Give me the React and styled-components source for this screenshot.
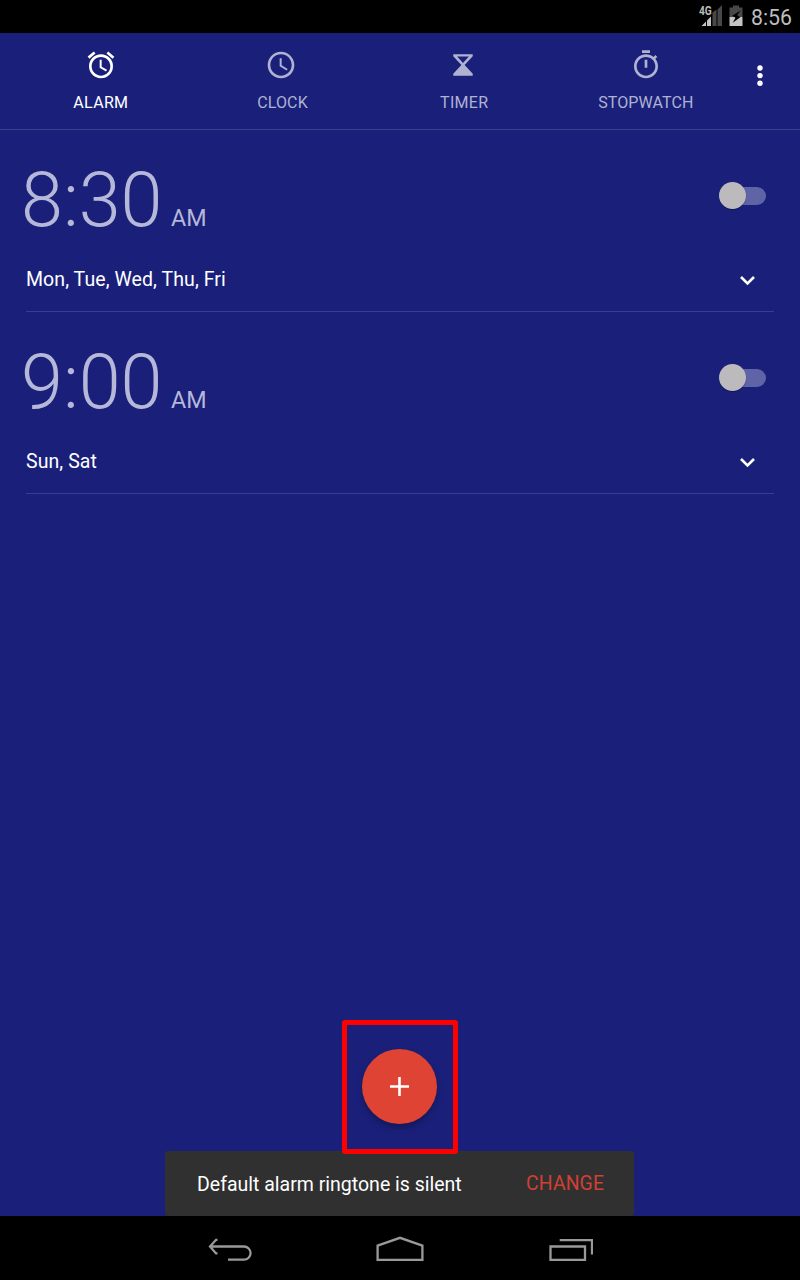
import React from "react";
import styled, { createGlobalStyle } from "styled-components";

const GlobalStyle = createGlobalStyle`
  * { box-sizing: border-box; }
  body { margin: 0; background: #000; }
  button { border: 0; padding: 0; background: none; font: inherit; color: inherit; display: block; }
  svg { display: block; }
`;

const Screen = styled.div`
  width: 800px;
  height: 1280px;
  display: flex;
  flex-direction: column;
  font-family: Roboto, "Liberation Sans", sans-serif;
  color: #fff;
  background: #1a207a;
  overflow: hidden;
`;

const StatusBar = styled.header`
  height: 33px;
  flex: none;
  display: flex;
  justify-content: flex-end;
  background: #000;
  padding-right: 8px;
`;

const StatusTime = styled.span`
  font-size: 21.3px;
  line-height: 36px;
  color: #bebebe;
  margin-left: 7px;
`;

const TabBar = styled.nav`
  height: 97px;
  flex: none;
  display: flex;
  padding-left: 10px;
  border-bottom: 1px solid #393f8e;
`;

const Tab = styled.button`
  width: 181.7px;
  display: flex;
  flex-direction: column;
  align-items: center;
  padding-top: 15.5px;
  color: ${(p) => (p.$active ? "#fff" : "#b0b2d2")};
`;

const IconSlot = styled.span`
  margin-left: ${(p) => p.$nudge}px;
`;

const TabLabel = styled.span`
  font-size: 16px;
  line-height: 20px;
  margin-top: 12px;
  letter-spacing: ${(p) => p.$tracking}px;
`;

const MoreButton = styled.button`
  margin: 30px 0 0 17.600px;
  height: 24px;
`;

const AlarmList = styled.main`
  flex: 1;
  padding: 0 26px;
`;

const AlarmCard = styled.section`
  height: 182px;
  display: flex;
  flex-direction: column;
  border-bottom: 1px solid #393f8e;
`;

const TimeRow = styled.div`
  height: 118px;
  display: flex;
  justify-content: space-between;
  padding: 26px 8px 0 0;
`;

const Time = styled.div`
  display: flex;
  align-items: baseline;
  color: #b5b8d8;
  height: 88px;
  margin-left: -5px;
`;

const Digits = styled.span`
  font-size: 75.5px;
  font-weight: 300;
  line-height: 88px;
`;

const Meridiem = styled.span`
  font-size: 23.3px;
  margin-left: 8.5px;
`;

const SwitchTrack = styled.button`
  width: 44px;
  height: 18px;
  margin-top: 31px;
  border-radius: 9px;
  background: #5e64a6;
  display: flex;
  align-items: center;
`;

const SwitchThumb = styled.span`
  flex: none;
  width: 27px;
  height: 27px;
  margin: -1px 0 0 -2.6px;
  border-radius: 50%;
  background: #bdbabe;
  box-shadow: 0 1px 1px rgba(0, 0, 0, 0.3);
`;

const DaysRow = styled.div`
  display: flex;
  justify-content: space-between;
  align-items: center;
  height: 63px;
  padding: 0 17px 0 0;
`;

const Days = styled.span`
  font-size: 19.5px;
  line-height: 24px;
  letter-spacing: 0.08px;
`;

const Footer = styled.footer`
  flex: none;
  display: flex;
  flex-direction: column;
  align-items: center;
`;

const Highlight = styled.div`
  position: relative;
  z-index: 1;
  width: 116px;
  height: 134px;
  margin-bottom: -3px;
  border: 5px solid #f00;
  border-radius: 3px;
  display: flex;
  justify-content: center;
  align-items: center;
`;

const AddButton = styled.button`
  width: 75px;
  height: 75px;
  margin: 0 1px 2px 0;
  border-radius: 50%;
  background: #df4334;
  display: flex;
  align-items: center;
  justify-content: center;
  box-shadow: 0 4px 6px rgba(0, 0, 0, 0.28);
`;

const Snackbar = styled.div`
  width: 469px;
  height: 65px;
  margin-right: 1px;
  padding: 0 30px 0 32px;
  border-radius: 3px;
  background: #303030;
  display: flex;
  align-items: center;
  justify-content: space-between;
`;

const Message = styled.span`
  font-size: 19.5px;
  line-height: 24px;
  padding-top: 2px;
`;

const Action = styled.button`
  font-size: 19.4px;
  line-height: 24px;
  letter-spacing: 0.1px;
  color: #d04033;
`;

const NavBar = styled.div`
  height: 64px;
  flex: none;
  background: #000;
  display: flex;
  align-items: flex-start;
  padding: 20px 0 0 207px;
  gap: 123px;
`;

const TabIcon = ({ d }) => (
  <svg width="32" height="32" viewBox="0 0 24 24" fill="currentColor">
    <path d={d} />
  </svg>
);

const tabs = [
  { label: "ALARM", nudge: 1, tracking: 0.3, d: "M22 5.72l-4.6-3.86-1.29 1.53 4.6 3.86L22 5.72zM7.88 3.39L6.6 1.86 2 5.71l1.29 1.53 4.59-3.85zM12.5 8H11v6l4.75 2.85.75-1.23-4-2.37V8zM12 4c-4.97 0-9 4.03-9 9s4.02 9 9 9a9 9 0 1 0 0-18zm0 16c-3.87 0-7-3.13-7-7s3.13-7 7-7 7 3.13 7 7-3.13 7-7 7z" },
  { label: "CLOCK", nudge: -2.5, tracking: 0.1, d: "M11.99 2C6.47 2 2 6.48 2 12s4.47 10 9.99 10C17.52 22 22 17.52 22 12S17.52 2 11.99 2zM12 20c-4.42 0-8-3.58-8-8s3.58-8 8-8 8 3.58 8 8-3.58 8-8 8zm.5-13H11v6l5.25 3.15.75-1.23-4.5-2.67z" },
  { label: "TIMER", nudge: -1.6, tracking: 0.3, d: "M4.7 4H19.3V5.4L13.2 12 19.3 18.5V20H4.7V18.5L10.8 12 4.7 5.4zM7.6 5.7L12 10.5 16.4 5.7z" },
  { label: "STOPWATCH", nudge: 0, tracking: 0.12, d: "M15 1H9v2h6V1zm-4 13h2V8h-2v6zm8.03-6.61l1.42-1.42c-.43-.51-.9-.99-1.41-1.41l-1.42 1.42C16.07 4.74 14.12 4 12 4c-4.97 0-9 4.03-9 9s4.02 9 9 9 9-4.03 9-9c0-2.12-.74-4.07-1.97-5.61zM12 20c-3.87 0-7-3.13-7-7s3.13-7 7-7 7 3.13 7 7-3.13 7-7 7z" },
];

const alarms = [
  { time: "8:30", days: "Mon, Tue, Wed, Thu, Fri" },
  { time: "9:00", days: "Sun, Sat" },
];

const StatusIcons = () => (
  <svg width="45" height="33" viewBox="699 0 45 33">
    <path d="M712.5 12.5l4-3V26h-4zM717.500 9.500l4.500-4.500V26h-4.500z" fill="#484848" />
    <path d="M701.500 26l4.500-4.500V26zM707 20.500l4-4V26h-4z" fill="#c4c4c4" />
    <text transform="translate(699 15) scale(0.8 1)" fontSize="12.5" fontWeight="700" textLength="16" lengthAdjust="spacingAndGlyphs" fill="#bcbcbc">4G</text>
    <path d="M729.500 7.500h3.500v-2h6v2h3.500V17h-13z" fill="#484848" />
    <path d="M729.500 17h13v9h-13z" fill="#c4c4c4" />
    <path d="M740.500 10.500l-8.300 5.300 3.300 2-2.800 5 7.600-5.600-3.100-1.900z" fill="#000" />
  </svg>
);

export default function App() {
  return (
    <Screen>
      <GlobalStyle />
      <StatusBar>
        <StatusIcons />
        <StatusTime>8:56</StatusTime>
      </StatusBar>
      <TabBar>
        {tabs.map((t, i) => (
          <Tab key={t.label} $active={i === 0}>
            <IconSlot $nudge={t.nudge}>
              <TabIcon d={t.d} />
            </IconSlot>
            <TabLabel $tracking={t.tracking}>{t.label}</TabLabel>
          </Tab>
        ))}
        <MoreButton aria-label="More options">
          <svg width="12" height="24" fill="#fff">
            <circle cx="6" cy="5" r="2.7" />
            <circle cx="6" cy="12.6" r="2.7" />
            <circle cx="6" cy="20.3" r="2.7" />
          </svg>
        </MoreButton>
      </TabBar>
      <AlarmList>
        {alarms.map((a) => (
          <AlarmCard key={a.time}>
            <TimeRow>
              <Time>
                <Digits>{a.time}</Digits>
                <Meridiem>AM</Meridiem>
              </Time>
              <SwitchTrack role="switch" aria-checked="false">
                <SwitchThumb />
              </SwitchTrack>
            </TimeRow>
            <DaysRow>
              <Days>{a.days}</Days>
              <svg width="20" height="14" fill="none" stroke="#fff" strokeWidth="2.6">
                <path d="M4 4l6.500 6.500L17 4" />
              </svg>
            </DaysRow>
          </AlarmCard>
        ))}
      </AlarmList>
      <Footer>
        <Highlight>
          <AddButton aria-label="Add alarm">
            <svg width="19" height="19" fill="#fff">
              <path d="M8.200 0h2.600v8.200H19v2.600h-8.200V19H8.200v-8.200H0V8.200h8.200z" />
            </svg>
          </AddButton>
        </Highlight>
        <Snackbar>
          <Message>Default alarm ringtone is silent</Message>
          <Action>CHANGE</Action>
        </Snackbar>
      </Footer>
      <NavBar>
        <svg width="46" height="28" viewBox="207 1236 46 28" fill="none" stroke="#999" strokeWidth="2.3">
          <path d="M217.500 1239.800h-1.500l-6 6.700 6 6.900h1.500M210 1246.500h34a6.600 6.600 0 0 1 0 13.200H228" />
        </svg>
        <svg width="48" height="28" viewBox="376 1236 48 28" fill="none" stroke="#999" strokeWidth="2.3">
          <path d="M377.600 1259.800v-14.200l22.400-7.800 22.400 7.800v14.200z" />
        </svg>
        <svg width="46" height="28" viewBox="547 1236 46 28" fill="none" stroke="#999" strokeWidth="2.3">
          <path d="M550.500 1246.500h34.500v13.300h-34.500zM559.700 1240.200h32.300v14.400" />
        </svg>
      </NavBar>
    </Screen>
  );
}
